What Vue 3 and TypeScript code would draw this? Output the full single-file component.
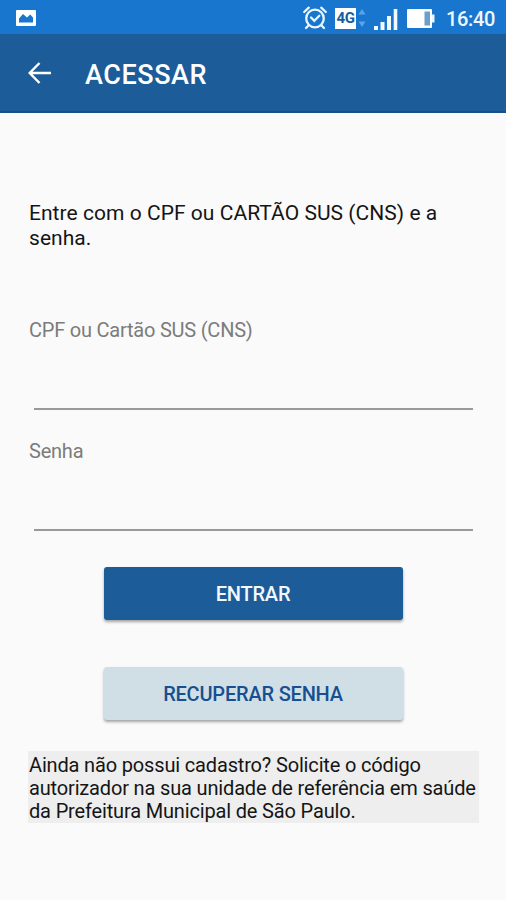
<script setup lang="ts">
import { ref } from 'vue'

interface Field {
  id: string
  label: string
  type: string
}

const fields: Field[] = [
  { id: 'document', label: 'CPF ou Cartão SUS (CNS)', type: 'text' },
  { id: 'password', label: 'Senha', type: 'password' },
]
const values = ref<Record<string, string>>({ document: '', password: '' })
</script>

<template>
  <div class="screen">
    <div class="status">
      <svg class="picture" width="20" height="16" viewBox="0 0 20 16">
        <path fill="#fff" fill-rule="evenodd" d="M1 0h18q1 0 1 1v14q0 1-1 1H1q-1 0-1-1V1q0-1 1-1ZM3 12.5h14V7.5L14.3 4.5 11 7.5 7 4 3 8.5Z" />
      </svg>
      <svg class="alarm" width="26" height="26" viewBox="0 0 26 26" fill="none" stroke="#eaf6ff" stroke-width="2.3" stroke-linecap="round">
        <circle cx="13" cy="13.5" r="8.8" />
        <path d="M2.2 7 6.8 2.7M23.8 7 19.2 2.7M6.5 20.5 4 23M19.5 20.5 22 23" />
        <path d="m9 12.5 3.3 3.3 5-5" />
      </svg>
      <div class="network">4G</div>
      <svg class="transfer" width="8" height="18" viewBox="0 0 8 18" fill="#5ba3e6">
        <path d="M4 0 7.5 5.5H.5ZM4 18 .5 12.5h7Z" />
      </svg>
      <svg class="signal" width="24" height="21" viewBox="0 0 24 21" fill="#f2f9ff">
        <rect x="0" y="17" width="4" height="4" /><rect x="6.5" y="13" width="4" height="8" />
        <rect x="13" y="7" width="4" height="14" /><rect x="19.7" y="0" width="3.6" height="21" />
      </svg>
      <svg class="battery" width="28" height="19" viewBox="0 0 28 19">
        <rect width="25" height="19" rx="1" fill="#fff" />
        <rect x="25" y="5.5" width="2.5" height="8" fill="#eaf6ff" />
        <rect x="17.5" y="2.5" width="5.5" height="14" fill="#6a9fce" />
      </svg>
      <time class="clock">16:40</time>
    </div>
    <header class="appbar">
      <button class="back" aria-label="Voltar">
        <svg width="24" height="22" viewBox="0 0 24 22" fill="none" stroke="#fff" stroke-width="2.4">
          <path d="M23 11H2M11.5 1 1.7 11l9.8 10" />
        </svg>
      </button>
      <h1>ACESSAR</h1>
    </header>
    <main>
      <p class="intro">Entre com o CPF ou CARTÃO SUS (CNS) e a senha.</p>
      <form @submit.prevent>
        <div v-for="field in fields" :key="field.id" class="field">
          <label :for="field.id">{{ field.label }}</label>
          <input :id="field.id" v-model="values[field.id]" :type="field.type" />
        </div>
        <button class="action enter" type="submit">ENTRAR</button>
        <button class="action recover" type="button">RECUPERAR SENHA</button>
      </form>
      <p class="note">Ainda não possui cadastro? Solicite o código autorizador na sua unidade de referência em saúde da Prefeitura Municipal de São Paulo.</p>
    </main>
  </div>
</template>

<style>
body { margin: 0; background: #fafafa; }
</style>

<style scoped>
.screen { height: 900px; overflow: hidden; background: #fafafa; font-family: Roboto, "Liberation Sans", sans-serif; color: #151515; }
.screen * { box-sizing: border-box; }
.status { height: 34px; display: flex; align-items: flex-start; background: #1976ce; }
.status svg { flex: none; }
.picture { margin: 10px 0 0 16px; }
.alarm { margin: 5px 0 0 266px; }
.network { width: 21px; height: 21px; margin: 8px 0 0 7px; background: #fff; color: #175d9e; font-size: 15px; line-height: 21px; font-weight: 700; letter-spacing: -0.5px; text-align: center; }
.transfer { margin: 9px 0 0 2px; }
.signal { margin: 9px 0 0 8px; }
.battery { margin: 9px 0 0 9px; }
.clock { margin: 7px 0 0 11px; color: #eef8ff; font-size: 20px; line-height: 24px; font-weight: 500; letter-spacing: -0.35px; white-space: nowrap; }
.appbar { height: 79px; display: flex; align-items: center; padding-left: 28px; background: #1c5c98; border-bottom: 2px solid #174f87; }
.back { width: 24px; height: 22px; padding: 0; border: 0; background: none; }
.back svg { display: block; }
h1 { margin: 4px 0 0 33px; color: #fff; font-size: 27px; line-height: 32px; font-weight: 500; letter-spacing: 0.55px; }
main { padding: 88px 28px 0; }
p { margin: 0; }
.intro { width: 430px; padding-left: 1px; font-size: 21px; line-height: 25px; letter-spacing: 0.04px; }
form { display: flex; flex-direction: column; align-items: center; padding-top: 67px; }
.field { width: 100%; height: 121px; display: flex; flex-direction: column; }
.field label { height: 24px; padding-left: 1px; color: #7c7c7c; font-size: 20px; line-height: 24px; letter-spacing: -0.22px; }
.field input { height: 68px; margin: 0 5px 0 6px; padding: 0; border: 0; border-bottom: 2px solid #999; border-radius: 0; background: transparent; outline: 0; font: 20px Roboto, sans-serif; }
.action { width: 299px; height: 53px; border: 0; border-radius: 3px; padding: 0; font: 500 20px Roboto, "Liberation Sans", sans-serif; letter-spacing: -0.2px; box-shadow: 0 2px 3px rgba(0, 0, 0, 0.35); }
.enter { margin-top: 7px; background: #1c5c98; color: #f2faff; }
.recover { margin-top: 47px; background: #d0dfe6; color: #174f91; }
.note { width: 451px; height: 72px; margin-top: 31px; padding: 3px 0 0 1px; background: #eee; font-size: 20px; line-height: 23px; letter-spacing: -0.16px; }
</style>
